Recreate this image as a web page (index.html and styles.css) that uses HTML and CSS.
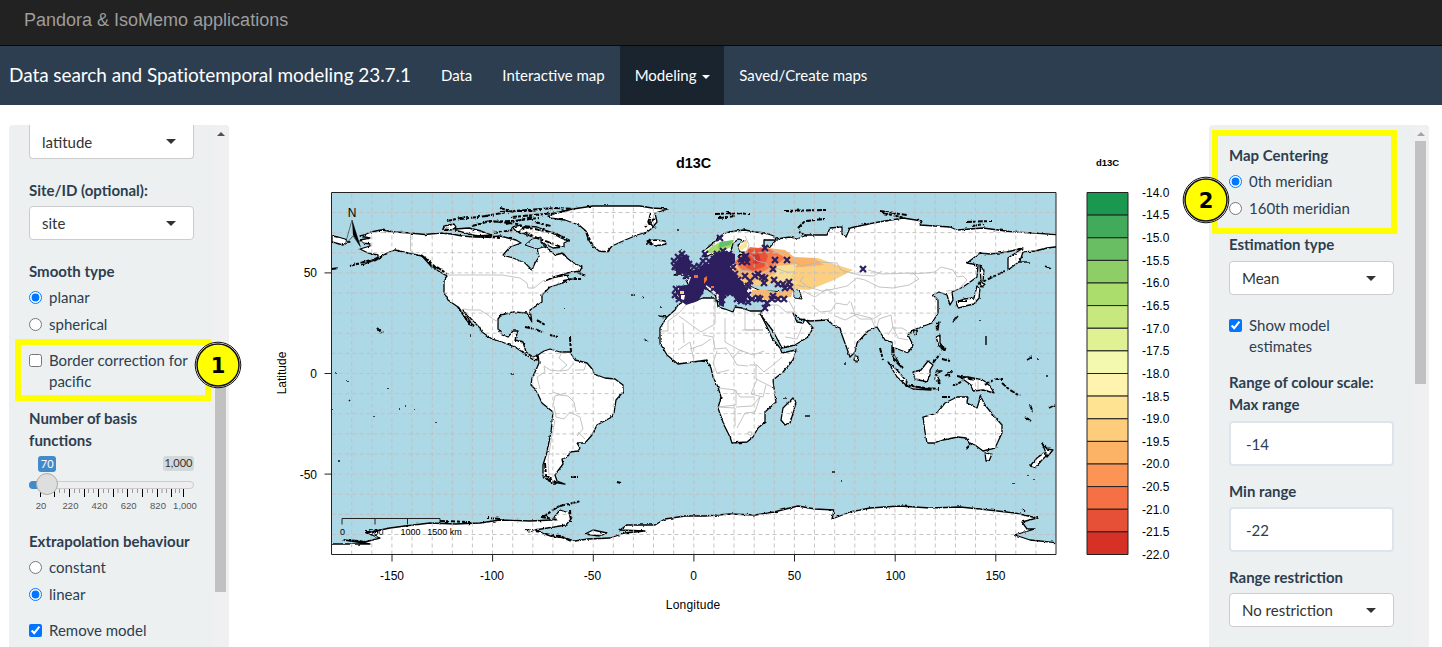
FILE: index.html
```html
<!DOCTYPE html>
<html lang="en">
<head>
<meta charset="utf-8">
<title>Pandora &amp; IsoMemo applications</title>
<link rel="stylesheet" href="styles.css">
</head>
<body>
<header class="topbar">Pandora &amp; IsoMemo applications</header>
<nav class="navbar">
  <span class="brand">Data search and Spatiotemporal modeling 23.7.1</span>
  <a class="nav-link">Data</a>
  <a class="nav-link">Interactive map</a>
  <a class="nav-link active">Modeling <span class="caret"></span></a>
  <a class="nav-link">Saved/Create maps</a>
</nav>
<main class="layout">
  <aside class="panel left">
    <div class="scroll">
      <div class="select first">latitude</div>
      <div class="title">Site/ID (optional):</div>
      <div class="select">site</div>
      <div class="title smooth">Smooth type</div>
      <label class="opt"><input type="radio" name="smooth" checked>planar</label>
      <label class="opt"><input type="radio" name="smooth">spherical</label>
      <label class="opt check"><input type="checkbox">Border correction for pacific</label>
      <div class="title basis">Number of basis functions</div>
      <svg class="slider" width="175" height="64" viewBox="29 451 175 64">
        <rect x="29.5" y="481.5" width="164" height="7" rx="3.5" fill="#eee" stroke="#ccc"/>
        <path d="M46 481H33a4 4 0 0 0 0 8h13z" fill="#428bca"/>
        <path d="M45.5 489v4M49.5 489v4M59.5 489v4M64.5 489v4M74.5 489v4M79.5 489v4M88.5 489v4M93.5 489v4M103.500 489v4M108.500 489v4M118 489v4M122.500 489v4M132.500 489v4M137.500 489v4M147.500 489v4M152.500 489v4M162 489v4M166.500 489v4M175.500 489v4M179.500 489v4" stroke="#999"/>
        <path d="M40.500 489v8M54.500 489v8M69.500 489v8M84.500 489v8M98.500 489v8M113.500 489v8M127.500 489v8M142.500 489v8M157.500 489v8M171.500 489v8M183.500 489v8" stroke="#000"/>
        <circle cx="47" cy="484" r="10.500" fill="#dedede" stroke="#ababab"/>
        <rect x="38" y="456" width="18" height="16" rx="3" fill="#428bca"/>
        <rect x="163" y="456" width="31" height="15" rx="3" fill="#d3d8d9"/>
        <g text-anchor="middle">
          <g font-size="11"><text x="47.200" y="468" fill="#fff">70</text><text x="178.500" y="467" fill="#333">1,000</text></g>
          <g class="ticks"><text x="41" y="509">20</text><text x="70.500" y="509">220</text><text x="99.500" y="509">420</text><text x="128.700" y="509">620</text><text x="158" y="509">820</text><text x="185" y="509">1,000</text></g>
        </g>
      </svg>
      <div class="title extra">Extrapolation behaviour</div>
      <label class="opt"><input type="radio" name="ext">constant</label>
      <label class="opt"><input type="radio" name="ext" checked>linear</label>
      <label class="opt check"><input type="checkbox" checked>Remove model outliers</label>
    </div>
    <div class="bar"><i class="arrow dark"></i><i class="thumb"></i></div>
    <div class="mark"></div>
    <svg class="badge" width="48" height="48" viewBox="-24 -24 48 48"><circle r="22.800" fill="#fff" stroke="#111"/><circle r="21" fill="#ff0" stroke="#111" stroke-width="1.500"/><text y="8" text-anchor="middle">1</text></svg>
  </aside>

  <section class="plot">
    <svg width="980" height="520" viewBox="229 125 980 520">
      <defs>
        <filter id="coast" filterUnits="userSpaceOnUse" x="325" y="185" width="740" height="376"><feTurbulence type="fractalNoise" baseFrequency=".28" numOctaves="2" seed="4"/><feDisplacementMap in="SourceGraphic" scale="2.600" xChannelSelector="R" yChannelSelector="G"/></filter>
        <clipPath id="frame"><path d="M331.500 192.500H1056V554.500H331.500z"/></clipPath>
        <marker id="site" markerUnits="userSpaceOnUse" markerWidth="10" markerHeight="10" refX="5" refY="5"><path d="M2 2l6 6M8 2l-6 6" stroke="#2d1f5f" stroke-width="2.200"/></marker>
      </defs>
      <g clip-path="url(#frame)">
        <rect x="331" y="192" width="726" height="363" fill="#add8e6"/>
        <g filter="url(#coast)">
          <g class="land">
            <path d="M364 235L371 232 381 230 395 232 410 233 425 234.500 440 233 452 234 462 236 475 237 490 237 500 236 508 238 516 240 521 243 510 247 503 255 513 258 525 263 532 270 535 263 539 257 537 248 541 245 550 250 555 255 563 253 567 258 572 262 582 267 580 271 567 273 553 277 545 281 556 277 567 275 569 279 563 283 550 287 542 295 542 302 536 306 530 310 532 322 527 313 513 312 501 315 498 319 498 328 502 335 508 337 513 331 518 331 515 340 523 342 526 352 533 357 538 355 537 360 532 359 524 353 515 347 502 342 492 339 482 332 479 327 473 321 463 310 466 315 473 326 470 325 463 315 458 307 448 300 444 292 444 280 447 276 440 272 430 265 422 256 408 253 395 250 387 253 375 260 362 265 378 257 378 255 368 253 360 249 370 246 370 244 363 243 360 240 370 238 360 236z"/>
            <path d="M538 355L544 351 550 349 560 352 570 352 575 360 587 363 593 370 594 374 605 378 615 379 623 385 623 392 616 400 614 413 610 418 597 425 592 435 585 443 577 443 580 448 578 451 570 452 568 457 562 459 563 464 560 468 555 475 557 481 565 484 552 482 543 477 543 465 547 452 551 432 553 412 542 403 536 390 531 385 532 378 536 370 539 363z"/>
            <path d="M548 216L560 212 573 209 593 206 620 206 640 206 652 208 668 209 655 213 657 222 651 229 647 232 637 235 623 241 612 246 607 252 599 251 592 245 588 239 586 231 579 225 565 220 550 218z"/>
            <path d="M647 241L655 240 665 241 666 244 656 246zM332 236l6 1 7 2 5 3-7 3-11-3zM525 226l12 1 13 5 11 6 7 3-4 2 0 4-11 1-10-5-13-7-11-4zM512 227l9-2 3 4-7 3zM444 226l10-2 2 3-4 3-9-1zM455 229l14-1 12 3 11 4-15 1-19-5z"/>
            <path d="M683 302L692 302 703 298 713 298 717 300 718 307 725 309 733 312 735 307 742 308 750 311 763 311 762 317 767 327 772 338 780 348 782 353 796 350 793 360 783 372 773 380 774 388 776 402 765 412 765 422 758 428 753 437 747 442 732 443 730 437 724 425 718 408 721 397 718 387 713 377 711 368 707 360 693 362 678 364 667 355 660 343 660 328 667 317 675 310 678 305z"/>
            <path d="M793 398L796 402 794 410 790 423 785 425 781 420 783 408 788 403z"/>
            <path d="M683 300L676 298 677 287 689 286 685 278 694 275 704 268 713 264 713 257 718 257 718 264 731 265 738 260 740 255 752 253 740 252 738 245 744 241 739 239 733 243 731 250 726 257 720 260 714 253 705 257 703 251 710 246 718 238 725 233 735 231 745 230 755 232 765 233 774 236 776 240 764 240 764 246 770 247 777 239 790 237 797 239 807 235 827 235 830 228 842 227 842 234 846 237 850 228 873 223 903 218 922 221 920 225 950 227 957 230 983 228 1013 232 1035 233 1060 235 1060 244 1055 247 1047 248 1035 251 1023 252 1020 261 1008 270 1008 258 1023 248 1007 252 990 254 980 253 967 263 978 265 977 277 963 287 952 292 953 300 950 305 947 295 939 292 933 295 938 300 938 313 932 323 913 330 908 335 913 345 908 353 895 348 893 353 902 368 897 363 892 355 892 342 885 340 877 327 868 331 857 343 855 352 850 357 842 335 840 328 833 325 828 320 810 321 800 319 793 313 797 322 803 323 805 319 813 328 808 337 795 345 782 348 773 331 760 314 765 308 766 301 750 299 745 294 739 302 730 290 718 279 710 284 726 297 716 301 716 296 703 286 692 289z"/>
            <path d="M923 417L937 413 945 403 957 397 968 397 967 403 977 408 979 402 980 395 985 405 993 415 1002 425 1002 433 995 448 983 451 975 445 970 443 966 438 958 437 943 440 934 443 927 443 925 432z"/>
            <path d="M675 268l8-6 3 3 5 6-8 4h-9l4-4-6-2zM985 453l7 1-3 7h-3zM1042 443L1047 449 1053 450 1047 457 1046 453zM1047 455l-6 6-6 7-5-2 7-8 7-5zM960 377L968 377 983 380 990 386 994 393 983 390 973 391 971 385zM913 372l8-2 7-9 5 4-3 5 0 5-3 7-12-3zM888 362l9 8 10 12-1 3-9-8zM905 385l18 3 8 2-18-1zM936 371l6 0-6 3 4 7-5-2zM936 337l4-2 0 8 5 7-6-4zM937 323l2-1-1 8-2-2zM855 355l3 2-1 5-3-2zM913 331l5-1-3 5zM956 302l8-3 10-1 3-12 3 2-1 10-5 6-9 2-7 2zM979 282l6 2-3 3zM980 265l4 6-1 9-2 1z"/>
            <path d="M325 544L370 544 344 540 365 542 380 538 366 533 390 528 405 526 430 523 455 524 480 523 500 520 530 521 552 520 560 510 569 513 571 519 566 525 535 530 550 536 566 538 575 541 588 539 610 538 625 533 645 531 620 530 627 525 655 525 665 519 685 516 705 516 730 514 755 515 774 512 798 506 815 509 834 510 832 519 850 512 870 508 900 506 930 508 960 507 980 509 1015 513 1037 518 1022 522 1027 529 1035 529 1018 534 1015 535 1030 540 1060 543V560H325z"/>
            <path d="M585 534l8-4 14 3-7 3z"/>
          </g>
          <path fill="#add8e6" stroke="#000" d="M750 286l3-7 8-1 7 5 8-1 9 7 1 3-17-1-8 0zM788 282l10-3 1 5-5 3 6 5 2 7-8-1 0-7-5-4zM525 245l7-6 9-2 0 6 6 3-10 3z"/>
          <path class="isles" d="M447 221l18-4M460 219l27-3M472 226l18-5 28 3M485 216l28-5 22 0M500 212l55-4 20 1M512 217l44-4 12-3M483 222l30-1 26-3M493 233l20-3M500 208l14 4M506 224l26-7M475 236l25 2M524 227l31 6 15 8M525 232l12 6 14 5 10 4M535 222l16 4M421 255l8 6 3 7M425 257l12 12M437 267l10 7M374 261l9-5M332 269l6-1M350 266l24-7M458 307l9 13 7 6M650 239l-2 4 5 2M651 213l-3 10 8 5M655 218l-10 9M586 232l7 14M525 327l10 2 7 3M537 320l8 5M550 335l8 2M570 337l1 15M563 281l13-3M572 279l9 0M577 272l9 4M715 214l17-1 18 1M719 218l17-2M727 212l9 5M784 211l42-1M880 211l27 4M883 213l22 5M967 222l25-1M972 226l12-2M798 228l7-7 20-2M799 232l8 4M545 463l1 13 11 7M548 480l8 4M571 477l7 0M617 482l4 1M543 517l10-7 8-5M560 506l21-5M541 517l17 3M570 510l1 12M525 530l17 2M545 534l15 2 11 5M500 519l-12-1M440 521l30 1M365 532l13 0M349 540l16 2M893 347l1 12 9 9M905 385l20 3 14 1M933 363l7-9M940 345l6 4M941 348l5 3M945 376l8-5M938 381l2 3M953 386l10-5M957 376l18 4M985 385l10-6 8 0M1002 383l8 7 10 6M1030 405l3 7M1025 417l6 4M1042 443l5 5M978 284l27-13M958 301l9 0M966 449l5-5M942 397l8 0M942 359l8 2M948 372l2 5M880 348l3 12M377 328l5 5"/>
          <path class="dots" d="M378 330l0 1M336 373v1M348 381l0 1M388 388v1M399 409l1 0M405 406l1 0M415 409l0 1M349 400l1 1M374 416v1M436 422v1M338 461h2M332 409v1M470 335h1M511 374l3 0M564 308v1M631 295h4M642 297l2 1M658 316l9 1M644 339l4 3M660 307h2M681 249v1M677 230h2M784 398h2M805 416h5M832 472l3 0M842 480v1M1013 483v1M1028 475v1M1034 479v1M1022 509l3 2M845 365v-3M980 320v1M986 336v9M1027 360l5-3M1037 359h2M1047 375v2M953 322l5-6M1049 408l6-3M1045 266l6 3M1030 263v1M1018 262h12"/>
        </g>
        <g stroke="none">
          <path fill="#a8dc68" d="M705 253l6-6 9-5 14-2-3 7-12 6z"/><path fill="#62c466" d="M720 242l14-2-4 5-12 3z"/><path fill="#f8e79b" d="M738 247l6-4-4-1 7-1v6l-7 4z"/>
          <path fill="#fbcf7f" d="M770 251l16 3 10 4 22 0 16 6 19 6-19 10-25 10-18-1-14-7-13 4-25-3-15-12z"/>
          <path fill="#fcb168" d="M760 247l25 3 9 7 20 1 10 7-35 3-20 8-19 6-20-9z"/><path fill="#f5794b" d="M750 247l20 2 16 9-12 8-14 7-18-3-8-8 7-6z"/><path fill="#e85338" d="M748 249l15-1 5 8-4 11-13 4-9-7z"/><path fill="#ce3830" d="M753 255l6-1 2 8-8 3z"/>
          <path fill="#f8df98" d="M777 266l20-2-6 13 7 7-24-4z"/><path fill="#fbb96b" d="M752 290h14l10 2 18-4-3 9-23 3-17-4z"/>
        </g>
        <path class="borders" d="M410.500 233v18l5 3M447 275h55l18 3 7 5 1 5 6 0 10-8M463 309l8 1h9l8 5 5 4 5 3M563 350l-4 8 8 7-7 6-10-1-6-4 1 6-8 5 3 12M560 371l8-1 6-7M575 370h9l2-6M553 392l7 3 8 1 6 6 2 10M554 406l2 11 8 2 6-7 10 5 3 12-6 7M555 420l-3 15-4 25 1 15M566 393l-11 3-2 9M578 432l7 7M660 331h8v-10l11-8 8-9M679 316l22 16 14-8v-25M683 323l1 20M745 310v20h18M742 330h21M703 335l10 2 2 12 11-1 7 10 7-8 13 5 11-4M725 318v24l18 10M678 350l12-8 4 19M690 349l12-4 9-6M717 351l-4 12 4 10 12-3M733 358l4 7 11 1M749 365h8l7 7 10-8 8-7M756 365v14l16 8M719 388l16 2 5 7 14 0M736 390v15l-18 2 17 1v18M736 407l16-1 8-9-5 15-10 1-8 15M757 379l-6 15 12 3 3-12M748 432l4 0-1 4-3-2zM745 236l4 9-2 7 10 9 9 2 4 8M737 271l13-1 9 6M726 259v9l-8 6M763 275l13-7 10 4 9 0M783 264l8-3 11 5 17-4 18 1 4 7 18 5 15 1 8-5M868 270l14 4 31-1 6 6-10 6-16 3-14-1-14-7-8-2-10 8-13 3-12 2-14-4-8-6 4-5M935 272l6-5 12 3 4 7 6-1 4 4-9 10-12 1M910 274l15-1 10-1M765 305l13 0 8 7 9 0-6-11M785 337l12 2 5-12M797 285l8 2M803 291l12 6 12-8 9 6M812 305l8 7 11-1 5-8 11 2 3-4M851 302l4 13-10 5-10-4M851 313l20 5 4 9M855 315l5 4 13 0 8-5M877 327l2-8 12-4 2 13 9 0 5 3M888 335l5-8 5 11 10 2M978 379v11"/>
        <path class="grid" d="M331.500 212.500h725M331.500 232.600h725M331.500 252.700h725M331.500 272.900h725M331.500 293h725M331.500 313.100h725M331.500 333.200h725M331.500 353.400h725M331.500 373.500h725M331.500 393.600h725M331.500 413.700h725M331.500 433.900h725M331.500 454h725M331.500 474.100h725M331.500 494.200h725M331.500 514.400h725M331.500 534.500h725M351.700 554.500V193M371.800 554.500V193M391.900 554.500V193M412 554.500V193M432.200 554.500V193M452.300 554.500V193M472.400 554.500V193M492.500 554.500V193M512.700 554.500V193M532.800 554.500V193M552.900 554.500V193M573 554.500V193M593.200 554.500V193M613.300 554.500V193M633.400 554.500V193M653.500 554.500V193M673.700 554.500V193M693.800 554.500V193M713.900 554.500V193M734 554.500V193M754.200 554.500V193M774.300 554.500V193M794.400 554.500V193M814.500 554.500V193M834.700 554.500V193M854.800 554.500V193M874.900 554.500V193M895 554.500V193M915.200 554.500V193M935.300 554.500V193M955.400 554.500V193M975.500 554.500V193M995.700 554.500V193M1015.800 554.500V193M1035.900 554.500V193"/>
        <path fill="#2d1f5f" d="M674 264l6-7 7-3 3 7 0 10 10-3 4-5 5 1 4-9 12-4 10 3 0 9-5 3 4 8 9 8 5 12-3 10-8-5-6-5-7 2 0 11-5-2 0-10-6-5-7-5-3 8-5 8-12 4-4-4-5-7 3-8 8-1 3-8-6-4-8 2z"/>
        <path class="sites" d="M675 267L674 261 678 257 682 254 686 259 689 264 681 267 687 270 686 276 694 267 699 266 703 261 709 261 704 269 711 269 720 238 705 254 714 259 717 254 723 251 729 254 731 260 724 266 733 267 735 274 738 280 731 280 745 257 742 262 747 262 746 256 741 259 765 248 775 260 787 260 773 269 863 269 762 277 758 274 765 278 764 283 745 276 750 281 755 276 774 280 778 284 783 284 785 288 790 287 789 282 748 286 743 288 735 290 739 295 745 291 748 295 741 301 737 299 730 293 722 300 722 294 719 291 714 284 709 281 704 286 700 291 695 295 690 296 687 300 679 299 675 295 676 289 682 289 689 289 695 286 698 280 704 277 711 275 715 272 724 275 726 282 732 286 760 299 765 308 767 303 772 299 778 299 784 299 773 296 752 299 758 298 748 302 740 285 720 285 714 288"/>
        <path fill="#ed7042" d="M694 275h4v3h-4zM704 278l3-2 0 4-3 4zM711 286h3v2h-3z"/>
        <path fill="#fff" d="M681 295l4 0-1 5-3-1z"/><path fill="#fbcf7f" d="M680 291h4v3h-4z"/>
      </g>
      <g class="axis">
        <path d="M331.500 192.500H1056V554.500H331.500zM324.500 272.900h7M324.500 373.500h7M324.500 474.100h7M392 554.500v7M492.600 554.500v7M593.300 554.500v7M693.900 554.500v7M794.500 554.500v7M895.200 554.500v7M995.800 554.500v7M342 524.500v-6h98v6M375 518.500v6M407.500 518.500v6"/>
      </g>
      <path d="M352 220l8 26-7-10-8 9z" fill="none" stroke="#333" stroke-width=".7"/><path d="M352 220l9 28-8-13z"/>
      <g class="labels" text-anchor="middle">
        <text x="352" y="217">N</text><g class="scale"><text x="342.500" y="535">0</text><text x="376" y="535">500</text><text x="410.500" y="535">1000</text><text x="444.500" y="535">1500 km</text></g>
        <text class="heading" x="693.500" y="168">d13C</text><text class="subheading" x="1107.500" y="166">d13C</text>
        <text x="392" y="580">-150</text><text x="492" y="580">-100</text><text x="592.500" y="580">-50</text><text x="693.500" y="580">0</text><text x="794.500" y="580">50</text><text x="895.500" y="580">100</text><text x="995.500" y="580">150</text>
        <text x="693" y="609" textLength="54.500">Longitude</text><text transform="translate(286 373) rotate(-90)">Latitude</text>
      </g>
      <g class="labels" text-anchor="end"><text x="317" y="277">50</text><text x="317" y="378">0</text><text x="317" y="479">-50</text></g>
      <g class="swatches">
        <path fill="#1a9850" d="M1087 192.500h41v22.600h-41z"/><path fill="#42ab5b" d="M1087 215.100h41v22.600h-41z"/><path fill="#69bd63" d="M1087 237.800h41v22.600h-41z"/><path fill="#8dce67" d="M1087 260.400h41V283h-41z"/><path fill="#abdd6d" d="M1087 283h41v22.600h-41z"/><path fill="#c7e77f" d="M1087 305.600h41v22.600h-41z"/><path fill="#dff293" d="M1087 328.300h41v22.600h-41z"/><path fill="#f3fab0" d="M1087 350.900h41v22.600h-41z"/><path fill="#fff4af" d="M1087 373.500h41v22.600h-41z"/><path fill="#fee393" d="M1087 396.100h41v22.600h-41z"/><path fill="#fdcd7b" d="M1087 418.800h41v22.600h-41z"/><path fill="#fdb365" d="M1087 441.400h41V464h-41z"/><path fill="#fb9454" d="M1087 464h41v22.600h-41z"/><path fill="#f57145" d="M1087 486.600h41v22.600h-41z"/><path fill="#e65036" d="M1087 509.300h41v22.600h-41z"/><path fill="#d73027" d="M1087 531.900h41v22.600h-41z"/>
      </g>
      <g class="labels"><text x="1142" y="197">-14.0</text><text x="1142" y="219">-14.5</text><text x="1142" y="242">-15.0</text><text x="1142" y="265">-15.5</text><text x="1142" y="287">-16.0</text><text x="1142" y="310">-16.5</text><text x="1142" y="333">-17.0</text><text x="1142" y="355">-17.5</text><text x="1142" y="378">-18.0</text><text x="1142" y="401">-18.5</text><text x="1142" y="423">-19.0</text><text x="1142" y="446">-19.5</text><text x="1142" y="468">-20.0</text><text x="1142" y="491">-20.5</text><text x="1142" y="514">-21.0</text><text x="1142" y="536">-21.5</text><text x="1142" y="559">-22.0</text></g>
    </svg>
  </section>

  <aside class="panel right">
    <div class="scroll">
      <div class="title top">Map Centering</div>
      <label class="opt"><input type="radio" name="mc" checked>0th meridian</label>
      <label class="opt"><input type="radio" name="mc">160th meridian</label>
      <div class="title est">Estimation type</div>
      <div class="select">Mean</div>
      <label class="opt check show"><input type="checkbox" checked>Show model estimates</label>
      <div class="title range">Range of colour scale:<br>Max range</div>
      <div class="number">-14</div>
      <div class="title num">Min range</div>
      <div class="number">-22</div>
      <div class="title num">Range restriction</div>
      <div class="select">No restriction</div>
    </div>
    <div class="bar"><i class="arrow"></i><i class="thumb"></i></div>
    <div class="mark"></div>
    <svg class="badge" width="48" height="48" viewBox="-24 -24 48 48"><circle r="22.800" fill="#fff" stroke="#111"/><circle r="21" fill="#ff0" stroke="#111" stroke-width="1.500"/><text y="8" text-anchor="middle">2</text></svg>
  </aside>
</main>
</body>
</html>
```
FILE: styles.css
```css
* { box-sizing: border-box; }
html { overflow: hidden; }
body { margin: 0; height: 647px; overflow: hidden; font: 15px/21.43px Lato, sans-serif; color: #2c3e50; background: #fff; }
.topbar { height: 46px; padding: 10px 24px; background: #222; border-bottom: 1px solid #080808; color: #9d9d9d; font: 18px/20px "Liberation Sans", sans-serif; }
.navbar { display: flex; height: 59px; line-height: 59px; padding-left: 9px; background: #2c3e50; color: #fff; }
.brand { font-size: 19px; line-height: 58px; letter-spacing: -.065px; padding-right: 15px; }
.nav-link { padding: 0 15px; }
.active { background: #1a242f; padding-right: 14.500px; }
.caret { display: inline-block; margin-left: 1.500px; vertical-align: middle; border: 4px solid transparent; border-top-color: #fff; border-bottom: 0; }
.layout { display: grid; grid-template-columns: 220px 980px 220px; padding: 20px 0 0 9px; }
.panel { position: relative; height: 522px; background: #ecf0f1; border-radius: 4px 4px 0 0; display: flex; justify-content: space-between; }
.scroll { width: 205px; height: 522px; overflow: hidden; padding: 0 20px; }
.title { font-weight: 700; margin: 21px 0 5px; white-space: nowrap; }
.title.smooth { margin-bottom: 4px; }
.basis { margin: 15.500px 0 0; white-space: normal; }
.extra { margin-top: 16px; }
.select { position: relative; width: 165px; height: 34px; padding: 0 12px; line-height: 33px; color: #333; background: #fff; border: 1px solid #ccc; border-radius: 4px; }
.select.first { border-top: 0; border-radius: 0 0 4px 4px; line-height: 34px; }
.select::after { content: ""; position: absolute; right: 17px; top: 14px; border: 5px solid transparent; border-top-color: #333; border-bottom: 0; }
.opt { display: block; padding-left: 20px; margin-bottom: 5.500px; }
.opt input { float: left; width: 13px; height: 13px; margin: 4px 0 0 -20px; }
.opt.check { margin: 14.500px 0 0; }
.opt.show { margin-top: 20px; }
.slider { display: block; font-family: Lato, sans-serif; }
.ticks { font: 9.500px "Liberation Sans", sans-serif; fill: #555; }
.title.top { margin-top: 20px; }
.title.est { margin-top: 14px; margin-bottom: 5.500px; }
.title.range { margin: 14.500px 0 5.500px; }
.title.num { margin-top: 15px; }
.number { width: 165px; height: 45px; padding: 0 15px; line-height: 42px; background: #fff; border: 2px solid #dce4ec; border-radius: 4px; }
.bar { width: 15px; display: flex; flex-direction: column; align-items: flex-start; background: #f0f0f0; border-radius: 0 4px 0 0; padding-left: 1px; }
.arrow { border: 4px solid transparent; border-top: 0; border-bottom-color: #a3a3a3; margin: 7px 0 5px 2px; }
.dark { border-bottom-color: #505050; }
.thumb { width: 11px; height: 243px; background: #c1c1c1; }
.left .thumb { height: 232px; margin-top: 219px; }
.mark { position: absolute; border: 6px solid #ff0; }
.left .mark { left: 6px; top: 214px; width: 196px; height: 62px; }
.right .mark { left: 3px; top: 5px; width: 185px; height: 104px; }
.badge { position: absolute; font: bold 21px "DejaVu Sans", sans-serif; }
.left .badge { left: 185px; top: 216px; }
.right .badge { left: -27px; top: 51px; }
.plot svg { display: block; }
.land { fill: #fff; stroke: #000; stroke-width: 1.300; stroke-linejoin: round; }
.isles { fill: none; stroke: #000; stroke-width: 2; stroke-dasharray: 5 1 3 2; }
.dots { fill: none; stroke: #111; stroke-width: 1.500; }
.borders { fill: none; stroke: #b5b5b5; stroke-width: .8; }
.grid { fill: none; stroke: #c3bdbd; stroke-width: .9; stroke-dasharray: 4 3; }
.sites { fill: none; marker: url(#site); }
.axis { fill: none; stroke: #222; stroke-width: 1; }
.labels { font: 12px "Liberation Sans", sans-serif; fill: #000; }
.scale { font-size: 9px; }
.heading { font-size: 14.400px; font-weight: 700; }
.subheading { font-size: 9.500px; font-weight: 700; }
.swatches { stroke: #222; stroke-width: 1; }
```
